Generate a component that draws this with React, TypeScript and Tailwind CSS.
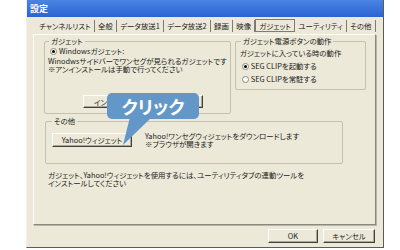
export default function App() {
  return (
    <div className="w-[400px] h-[250px] bg-white relative overflow-hidden font-['Noto_Sans_CJK_JP',sans-serif] [font-feature-settings:'palt'] text-[7.4px] leading-[8px] text-[#1a1a1a]">
      <div className="ml-[26px] w-[358px] h-[248px] bg-[#ece9d8] border-l border-[#f4f2e8] border-r border-r-[#5c5b55] border-b border-b-[#5c5b55] flex flex-col">
        <div className="h-[17px] bg-gradient-to-b from-[#4a84e4] to-[#2b63d2] text-white font-bold text-[9px] leading-[17px] pl-[3px]">設定</div>
        <div className="flex-1 flex flex-col pl-[6px] pr-[7px]">
          <div className="h-[17px] flex items-end pl-[3px]">
            {[
              ["チャンネルリスト", false],
              ["全般", false],
              ["データ放送1", false],
              ["データ放送2", false],
              ["録画", false],
              ["映像", false],
              ["ガジェット", true],
              ["ユーティリティ", false],
              ["その他", false],
            ].map(([t, sel]) =>
              sel ? (
                <div key={t as string} className="h-[13px] mb-[2px] px-[3px] leading-[11px] border border-[#7e7c72] bg-[#ece9d8] whitespace-nowrap">
                  {t as string}
                </div>
              ) : (
                <div key={t as string} className="h-[12px] mb-[2px] px-[3.2px] leading-[12px] border-r border-[#7e7c72] whitespace-nowrap">
                  {t as string}
                </div>
              )
            )}
          </div>
          <div className="h-[191px] border-t border-l border-[#fdfdfb] border-r border-r-[#8b897e] border-b border-b-[#8b897e] shadow-[1px_1px_0_#b8b5a6] relative">
            <div className="flex mt-[2px] ml-[10px] gap-[4px] items-start">
              <fieldset className="w-[169px] h-[77px] border border-[#c3c0b0] rounded-[2px] px-[3px]">
                <legend className="ml-[1px] px-[2px]">ガジェット</legend>
                <div className="flex items-center mt-[2px] ml-[2px] gap-[2px]">
                  <span className="w-[7px] h-[7px] rounded-full border border-[#8a877a] bg-white flex items-center justify-center">
                    <span className="w-[3px] h-[3px] rounded-full bg-black" />
                  </span>
                  <span>Windowsガジェット:</span>
                </div>
                <div className="mt-[2px] whitespace-nowrap">Winodwsサイドバーでワンセグが見られるガジェットです</div>
                <div className="whitespace-nowrap">※アンインストールは手動で行ってください</div>
                <div className="mt-[22px] ml-[35px] w-[120px] h-[13px] bg-[#ece9d8] border border-t-white border-l-white border-r-[#404040] border-b-[#404040] shadow-[inset_-1px_-1px_0_#aca899] leading-[11px] pl-[10px]">
                  インストール
                </div>
              </fieldset>
              <fieldset className="w-[131px] h-[53px] border border-[#c3c0b0] rounded-[2px] px-[4px]">
                <legend className="ml-[1px] px-[2px]">ガジェット電源ボタンの動作</legend>
                <div className="mt-[4px] whitespace-nowrap">ガジェットに入っている時の動作</div>
                <div className="flex items-center mt-[5px] ml-[2px] gap-[2px]">
                  <span className="w-[7px] h-[7px] rounded-full border border-[#8a877a] bg-white flex items-center justify-center">
                    <span className="w-[3px] h-[3px] rounded-full bg-black" />
                  </span>
                  <span>SEG CLIPを起動する</span>
                </div>
                <div className="flex items-center mt-[5px] ml-[2px] gap-[2px]">
                  <span className="w-[7px] h-[7px] rounded-full border border-[#8a877a] bg-white" />
                  <span>SEG CLIPを常駐する</span>
                </div>
              </fieldset>
            </div>
            <fieldset className="ml-[11px] mt-[3px] w-[298px] h-[47px] border border-[#c3c0b0] rounded-[2px] px-[6px]">
              <legend className="ml-[0px] px-[2px]">その他</legend>
              <div className="flex items-start mt-[8px]">
                <div className="w-[80px] h-[14px] bg-[#ece9d8] border border-t-white border-l-white border-r-[#404040] border-b-[#404040] shadow-[inset_-1px_-1px_0_#aca899] leading-[12px] text-center whitespace-nowrap">
                  Yahoo!ウィジェット
                </div>
                <div className="ml-[13px] mt-[-1px] whitespace-nowrap">
                  <div>Yahoo!ワンセグウィジェットをダウンロードします</div>
                  <div>※ブラウザが開きます</div>
                </div>
              </div>
            </fieldset>
            <div className="ml-[14px] mt-[7px] whitespace-nowrap">
              <div>ガジェット、Yahoo!ウィジェットを使用するには、ユーティリティタブの連動ツールを</div>
              <div>インストールしてください</div>
            </div>
          </div>
          <div className="flex justify-end gap-[5px] mt-[4px] pr-[1px]">
            <div className="w-[50px] h-[14px] bg-[#ece9d8] border border-t-white border-l-white border-r-[#404040] border-b-[#404040] shadow-[inset_-1px_-1px_0_#aca899] leading-[12px] text-center">OK</div>
            <div className="w-[52px] h-[14px] bg-[#ece9d8] border border-t-white border-l-white border-r-[#404040] border-b-[#404040] shadow-[inset_-1px_-1px_0_#aca899] leading-[12px] text-center">キャンセル</div>
          </div>
        </div>
      </div>
      <div className="absolute left-[107px] top-[93px] w-[92px] h-[26px] rounded-[5px] bg-[#6397c7] text-white font-bold text-[18px] leading-[26px] text-center [font-feature-settings:'normal']">
        クリック
      </div>
      <svg className="absolute left-[115px] top-[117px]" width="40" height="30" viewBox="0 0 40 30">
        <polygon points="15,0 37,0 8,28" fill="#6397c7" />
      </svg>
    </div>
  );
}
